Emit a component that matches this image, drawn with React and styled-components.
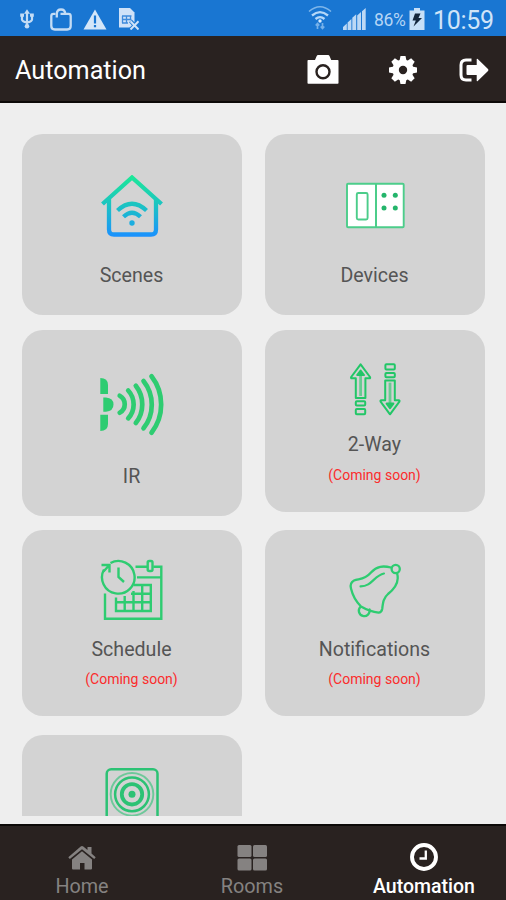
import React from 'react';
import styled, { createGlobalStyle } from 'styled-components';

const GREEN = '#2ecc71';

const App = () => {
  return (
    <>
      <GlobalStyle />
      <St.Screen>
        <StatusBar />
        <St.Header>
          <St.Title>Automation</St.Title>
          <St.Actions>
            <CameraIcon />
            <GearIcon />
            <ExitIcon />
          </St.Actions>
        </St.Header>
        <St.Content>
          <St.Column>
            {LEFT_CARDS.map((card) => (
              <MenuCard key={card.label} {...card} />
            ))}
            <St.Card $height={186} $top={32}>
              <SensorIcon />
            </St.Card>
          </St.Column>
          <St.Column>
            {RIGHT_CARDS.map((card) => (
              <MenuCard key={card.label} {...card} />
            ))}
          </St.Column>
        </St.Content>
        <St.Nav>
          <St.Tab>
            <HomeIcon />
            <St.TabLabel>Home</St.TabLabel>
          </St.Tab>
          <St.Tab>
            <RoomsIcon />
            <St.TabLabel>Rooms</St.TabLabel>
          </St.Tab>
          <St.Tab>
            <ClockIcon />
            <St.TabLabel $active>Automation</St.TabLabel>
          </St.Tab>
        </St.Nav>
      </St.Screen>
    </>
  );
};

export default App;

const MenuCard = ({ icon: Icon, label, note, height, top, gap, noteGap, margin }) => (
  <St.Card $height={height} $top={top} $margin={margin}>
    <Icon />
    <St.Label $gap={gap}>{label}</St.Label>
    {note && <St.Note $gap={noteGap}>{note}</St.Note>}
  </St.Card>
);

const StatusBar = () => (
  <St.StatusBar>
    <St.StatusGroup>
      <svg width="14" height="20" viewBox="0 0 14 20" fill="none" stroke="#c3dcf5" strokeWidth="2.2">
        <path d="M7 3v14M2 6v4.5q0 2 5 3M12 6v4.500q0 2-5 3" />
        <path d="M4 4.800 7 .3l3 4.500z" fill="#c3dcf5" stroke="none" />
        <circle cx="7" cy="17.300" r="2.300" fill="#c3dcf5" stroke="none" />
        <path d="M.2 4.500h3.800v3.300H.2zM10 4.500h3.800v3.300H10z" fill="#c3dcf5" stroke="none" />
      </svg>
      <svg width="22" height="23" viewBox="0 0 22 23" fill="none" stroke="#c3dcf5" strokeWidth="2.300">
        <path d="M5.500 5.800h-2Q1.300 5.800 1.300 8v10q0 3.500 3.500 3.500h12.400q3.500 0 3.500-3.500V8q0-2.200-2.200-2.200H10.500" />
        <path d="M6.800 9.500V6q0-4.500 4.200-4.500T15.200 6v1" />
      </svg>
      <svg width="24" height="21" viewBox="0 0 24 21">
        <path d="M12 .5 23.500 20.500H.5z" fill="#d3e6f9" />
        <path d="M12 6.500v8M12 16v2.300" stroke="#1976d2" strokeWidth="2.2" />
      </svg>
      <svg width="21" height="22" viewBox="0 0 21 22" fill="none">
        <path d="M1 0h11l4.500 4.500v15H1z" fill="#cfe2f8" />
        <path d="M4 8h9.500M4 11.500h9.500M4 15h6M4.500 8v7M8.500 8v7M12.500 8v3" stroke="#3f8bdb" strokeWidth="1.300" />
        <path d="m12.500 13 8 8.500M20.500 13l-8 8.500" stroke="#1976d2" strokeWidth="4" />
        <path d="m12.500 13.300 8 8.200M20.500 13.300l-8 8.200" stroke="#cfe2f8" strokeWidth="2" />
      </svg>
    </St.StatusGroup>
    <St.StatusInfo>
      <svg width="24" height="25" viewBox="0 0 24 25" fill="none" stroke="#b5d8f8">
        <path d="M1 6.500q11-9.500 22 0" strokeWidth="1.600" opacity=".65" />
        <path d="M4 10.500q8-6.800 16 0" strokeWidth="2.300" />
        <path d="M7.500 14q4.500-3.800 9 0" strokeWidth="2.300" />
        <circle cx="12" cy="16" r="1.700" fill="#d9ecff" stroke="none" />
        <path d="M9.500 24v-5.500M7.700 20.500l1.800-2 1.800 2M14.500 18v5.500M12.700 21.500l1.800 2 1.800-2" strokeWidth="1.700" opacity=".6" />
      </svg>
      <svg width="23" height="22" viewBox="0 0 23 22" fill="#bcd8f5">
        <path d="M0 22v-3l3.800-3.600V22zM4.600 22v-7.500L8.400 11V22zM9.300 22V9.800L13.200 6.200V22zM14.200 22V7.500L18 4v18zM19 22V3.300L22.700 0v22z" />
      </svg>
      <St.Percent>86%</St.Percent>
      <svg width="16" height="22" viewBox="0 0 16 22">
        <path d="M5 0h6v2.500h4.500V22H.5V2.500H5z" fill="#c7dff7" />
        <path d="M6 5.500h5.500L9.500 10H13l-8.500 8.500 2.300-6H3.500z" fill="#14263c" />
      </svg>
      <St.Time>10:59</St.Time>
    </St.StatusInfo>
  </St.StatusBar>
);

const CameraIcon = () => (
  <svg width="32" height="31" viewBox="0 0 32 31">
    <path d="M1.300 6H8l1.700-4q.4-1 1.400-1h10q1 0 1.400 1l1.700 4H30.700q.8 0 .8.8v22.200q0 .8-.8.800H1.300q-.8 0-.8-.8V6.800q0-.8.800-.8z" fill="#fff" />
    <circle cx="16" cy="17.700" r="6.500" fill="none" stroke="#292220" strokeWidth="2.400" />
  </svg>
);

const GearIcon = () => (
  <svg width="30" height="30" viewBox="-15 -15 30 30">
    {[0, 45, 90, 135].map((angle) => (
      <path key={angle} d="M-2.500-14h5l1.300 6v16l-1.300 6h-5l-1.300-6V-8z" fill="#fff" transform={`rotate(${angle})`} />
    ))}
    <circle r="10.500" fill="#fff" />
    <circle r="4.200" fill="#292220" />
  </svg>
);

const ExitIcon = () => (
  <svg width="30" height="26" viewBox="0 0 30 26">
    <path d="M12.500 3H7Q2 3 2 8v10q0 5 5 5h5.500" fill="none" stroke="#fff" strokeWidth="3" />
    <path d="M8.500 8h9.200V2.500q0-1.300 1-.4l10.300 10q.9.900 0 1.800l-10.300 10q-1 .9-1-.4V18H8.500q-1 0-1-1V9q0-1 1-1z" fill="#fff" />
  </svg>
);

const ScenesIcon = () => (
  <St.MenuIcon viewBox="0 0 64 64">
    <defs>
      <linearGradient id="scenes" gradientUnits="userSpaceOnUse" x1="32" y1="0" x2="32" y2="62">
        <stop offset="0" stopColor="#1de996" />
        <stop offset=".5" stopColor="#1cc2c4" />
        <stop offset="1" stopColor="#1a90ff" />
      </linearGradient>
    </defs>
    <g fill="none" stroke="url(#scenes)" strokeWidth="4.300">
      <path d="M2.500 29 32 2.500l29.500 26.500" />
      <path d="M9 24v30.500q0 5 5 5h37q5 0 5-5V24" />
      <path d="M17.500 35.500q14.500-13.500 29 0" />
      <path d="M23.500 41.700q8.500-8 17 0" />
    </g>
    <circle cx="32" cy="48" r="2.700" fill="#1baee0" />
  </St.MenuIcon>
);

const DevicesIcon = () => (
  <St.MenuIcon viewBox="0 0 64 64">
    <g fill="#fff" stroke="#4ccd8a" strokeWidth="1.900">
      <rect x="4" y="8.800" width="56.700" height="43.400" rx="1" />
      <path d="M33 9v43" strokeWidth="2" />
      <rect x="13.800" y="18" width="10.800" height="26.500" rx="1.500" />
    </g>
    <g fill="#24b56b">
      <circle cx="41" cy="20.300" r="2.500" />
      <circle cx="52.300" cy="20.300" r="2.500" />
      <circle cx="41" cy="33" r="2.500" />
      <circle cx="52.300" cy="33" r="2.500" />
    </g>
  </St.MenuIcon>
);

const IrIcon = () => (
  <St.MenuIcon viewBox="0 0 64 64">
    <g fill={GREEN}>
      <path d="M.3 5Q8 5 8 12v9H.3zM.3 41.700H8V51q0 7-7.700 7zM3.300 24.500H6q7.500.5 7.500 7t-7.500 7.300H3.300z" />
    </g>
    <g fill="none" stroke={GREEN} strokeWidth="4.700" strokeLinecap="round">
      <path d="M19.700 22.700A9.700 9.700 0 0 1 19.700 39.700" />
      <path d="M28.200 17.500A20.500 20.500 0 0 1 28.200 45.300" />
      <path d="M35.800 12.800A30 30 0 0 1 35.800 50" />
      <path d="M43.500 8A38 38 0 0 1 43.500 55.300" />
      <path d="M51.500 3.300A46 46 0 0 1 51.500 59.700" />
    </g>
  </St.MenuIcon>
);

const ArrowParts = () => (
  <>
    <path d="M17.600 7.300 27 20q.6 1.300-.7 1.300h-3.900V41h-9.600V21.300H8.900Q7.600 21.300 8.200 20z" />
    <path d="M17.600 18v21" strokeWidth="2.800" opacity=".6" />
    <path d="M17.600 13.500 21 18h-6.800z" fill="#22c667" />
    <rect x="12.800" y="44.300" width="9.400" height="4.200" rx="1" />
    <rect x="12.800" y="52" width="9.400" height="5.300" rx="1" />
  </>
);

const TwoWayIcon = () => (
  <St.MenuIcon viewBox="0 0 64 64">
    <g fill="none" stroke="#22c667" strokeWidth="2" strokeLinejoin="round">
      <ArrowParts />
      <g transform="rotate(180 32.300 32.300)">
        <ArrowParts />
      </g>
    </g>
  </St.MenuIcon>
);

const ScheduleIcon = () => (
  <St.MenuIcon viewBox="0 0 64 64">
    <g fill="none" stroke={GREEN} strokeWidth="2.400">
      <path d="M10.500 5A16.300 16.300 0 1 1 4 11.500" />
      <path d="M1.500 7h8v7.500M9 7.500l-5.500 6" />
      <path d="M18.500 9.500V19l5.500 5" />
      <path d="M5 35.500v25.200h56.300V8.700h-8M47.500 8.700H35.500M37 19.400h24.300" />
      <rect x="47.700" y="3" width="4.800" height="10" rx="1.500" />
      <path d="M16 39.500V53h34.800V27H33.500M24.700 38v15M33.500 33v20M42.200 27v26M31 35.700h19.800M16 44.300h34.800" />
    </g>
  </St.MenuIcon>
);

const BellIcon = () => (
  <St.MenuIcon viewBox="0 0 64 64">
    <g fill="none" stroke={GREEN} strokeWidth="2.300" strokeLinecap="round">
      <path d="M48 9.500C40 7.500 34 8 28 14.500C21.500 22 16 20.500 11 22.500Q6.500 25 8 30.500C9.500 37 13.500 44 18 48.500C24 52 29 54 35.500 54.700Q38.500 54.500 39.200 51C40 44 40.500 40 45 36C50 32 54.500 27 54.700 20.500Q54.800 17.500 54 15" />
      <path d="M17.500 28.400C29 28.500 31 17.500 41 15.500" strokeWidth="2.100" />
      <circle cx="52.700" cy="11" r="4.100" />
      <path d="M17.300 49A5.400 5.400 0 1 0 26.500 51.500" />
    </g>
  </St.MenuIcon>
);

const SensorIcon = () => (
  <St.MenuIcon viewBox="0 0 64 64">
    <g fill="none" stroke="#2cc274">
      <rect x="6.700" y="2.200" width="50.800" height="60" rx="4.500" strokeWidth="2.500" />
      <circle cx="32" cy="27.300" r="10.200" strokeWidth="3.800" />
      <circle cx="32" cy="27.300" r="16.900" strokeWidth="2.500" />
      <circle cx="32" cy="27.300" r="21.300" strokeWidth="1.900" opacity=".6" />
    </g>
    <circle cx="32" cy="27.300" r="3.500" fill="#2cc274" />
  </St.MenuIcon>
);

const HomeIcon = () => (
  <svg width="28" height="26" viewBox="0 0 28 26" fill="#858281">
    <path d="M14 6.300 24 14.500v9q0 1-1 1h-6.500V18h-4.500v6.500H5q-1 0-1-1v-9z" />
    <path d="M14 1q.7 0 1.300.5L19.500 5V2h4v6.500l4.200 3.700-1.500 1.900L14 4.200 1.800 14.100.3 12.200l12.400-10.700Q13.300 1 14 1z" />
  </svg>
);

const RoomsIcon = () => (
  <svg width="30" height="26" viewBox="0 0 30 26" fill="#858281">
    <rect x="0.500" y="0" width="14" height="12" rx="1.500" />
    <rect x="16" y="0" width="14" height="12" rx="1.500" />
    <rect x="0.500" y="13.500" width="14" height="12" rx="1.500" />
    <rect x="16" y="13.500" width="14" height="12" rx="1.500" />
  </svg>
);

const ClockIcon = () => (
  <svg width="28" height="28" viewBox="0 0 28 28" fill="none" stroke="#fff">
    <circle cx="14" cy="14" r="12" strokeWidth="3.900" />
    <path d="M15.800 7.500v8H9.500" strokeWidth="2.300" />
  </svg>
);

const LEFT_CARDS = [
  { icon: ScenesIcon, label: 'Scenes', height: 181, top: 41, gap: 25, margin: 15 },
  { icon: IrIcon, label: 'IR', height: 186, top: 43, gap: 28, margin: 14 },
  { icon: ScheduleIcon, label: 'Schedule', note: '(Coming soon)', height: 186, top: 28, gap: 16, noteGap: 8, margin: 19 },
];

const RIGHT_CARDS = [
  { icon: DevicesIcon, label: 'Devices', height: 181, top: 41, gap: 25, margin: 15 },
  { icon: TwoWayIcon, label: '2-Way', note: '(Coming soon)', height: 182, top: 27, gap: 12, noteGap: 9, margin: 18 },
  { icon: BellIcon, label: 'Notifications', note: '(Coming soon)', height: 186, top: 28, gap: 16, noteGap: 8 },
];

const GlobalStyle = createGlobalStyle`
  * {
    box-sizing: border-box;
  }
  body {
    margin: 0;
    font-family: Roboto, sans-serif;
  }
  svg {
    display: block;
    flex-shrink: 0;
  }
`;

const St = {
  Screen: styled.div`
    display: flex;
    flex-direction: column;

    width: 506px;
    height: 900px;
    overflow: hidden;

    background-color: #eeeeee;
  `,
  StatusBar: styled.div`
    display: flex;
    justify-content: space-between;

    height: 36px;
    flex-shrink: 0;
    padding: 0 12px 0 20px;

    background-color: #1976d2;
  `,
  StatusGroup: styled.div`
    display: flex;
    align-items: center;
    gap: 13px;

    padding-top: 2px;

    svg:first-child {
      margin-right: 3px;
    }
    svg:nth-child(3) {
      margin-left: -2px;
    }
    svg:nth-child(4) {
      margin-left: -2px;
    }
  `,
  StatusInfo: styled.div`
    display: flex;
    align-items: center;

    padding-top: 2px;

    svg:first-child {
      margin: -4px 11px 0 0;
    }
  `,
  Percent: styled.span`
    width: 32px;
    margin: 2px 3px 0 8px;

    font-size: 17.5px;
    letter-spacing: -0.3px;
    color: #b5d5f5;
  `,
  Time: styled.span`
    width: 61px;
    margin: 3px 0 0 8px;

    font-size: 25px;
    line-height: 34px;
    letter-spacing: -0.3px;
    color: #d0e4f8;
  `,
  Header: styled.header`
    display: flex;
    align-items: center;
    justify-content: space-between;

    height: 67px;
    flex-shrink: 0;
    padding: 0 17px 0 15px;

    border-bottom: 2px solid #0c0908;
    background-color: #292220;
  `,
  Title: styled.h1`
    margin: 4px 0 0;

    font-size: 25.2px;
    font-weight: 400;
    line-height: 30px;
    color: #ffffff;
  `,
  Actions: styled.div`
    display: flex;
    align-items: center;

    padding-top: 2px;

    svg:nth-child(2) {
      margin: 0 41px 0 49px;
    }
  `,
  Content: styled.main`
    display: grid;
    grid-template-columns: 220px 220px;
    column-gap: 23px;

    height: 713px;
    flex-shrink: 0;
    padding: 31px 0 0 22px;
    overflow: hidden;
  `,
  Column: styled.div`
    display: flex;
    flex-direction: column;
  `,
  Card: styled.div`
    display: flex;
    flex-direction: column;
    align-items: center;

    height: ${({ $height }) => $height}px;
    flex-shrink: 0;
    margin-bottom: ${({ $margin = 0 }) => $margin}px;
    padding-top: ${({ $top }) => $top}px;

    border-radius: 21px;
    background-color: #d3d3d3;
  `,
  MenuIcon: styled.svg`
    width: 64px;
    height: 64px;
  `,
  Label: styled.div`
    margin-top: ${({ $gap }) => $gap}px;
    padding-right: 1px;

    font-size: 19.6px;
    line-height: 24px;
    color: #555555;
  `,
  Note: styled.div`
    margin-top: ${({ $gap }) => $gap}px;
    padding-right: 1px;

    font-size: 14px;
    line-height: 18px;
    color: #fb2c2c;
  `,
  Nav: styled.nav`
    display: grid;
    grid-template-columns: 164px 176px 168px;

    height: 76px;
    flex-shrink: 0;
    margin-top: 8px;
    padding-bottom: 1px;

    border-top: 2px solid #0c0908;
    background-color: #292220;
  `,
  Tab: styled.div`
    display: flex;
    flex-direction: column;
    align-items: center;
    justify-content: flex-end;
  `,
  TabLabel: styled.span`
    margin-top: 4px;

    font-size: ${({ $active }) => ($active ? 19.5 : 19.8)}px;
    font-weight: ${({ $active }) => ($active ? 500 : 400)};
    line-height: 24px;
    color: ${({ $active }) => ($active ? '#ffffff' : '#858281')};
  `,
};
